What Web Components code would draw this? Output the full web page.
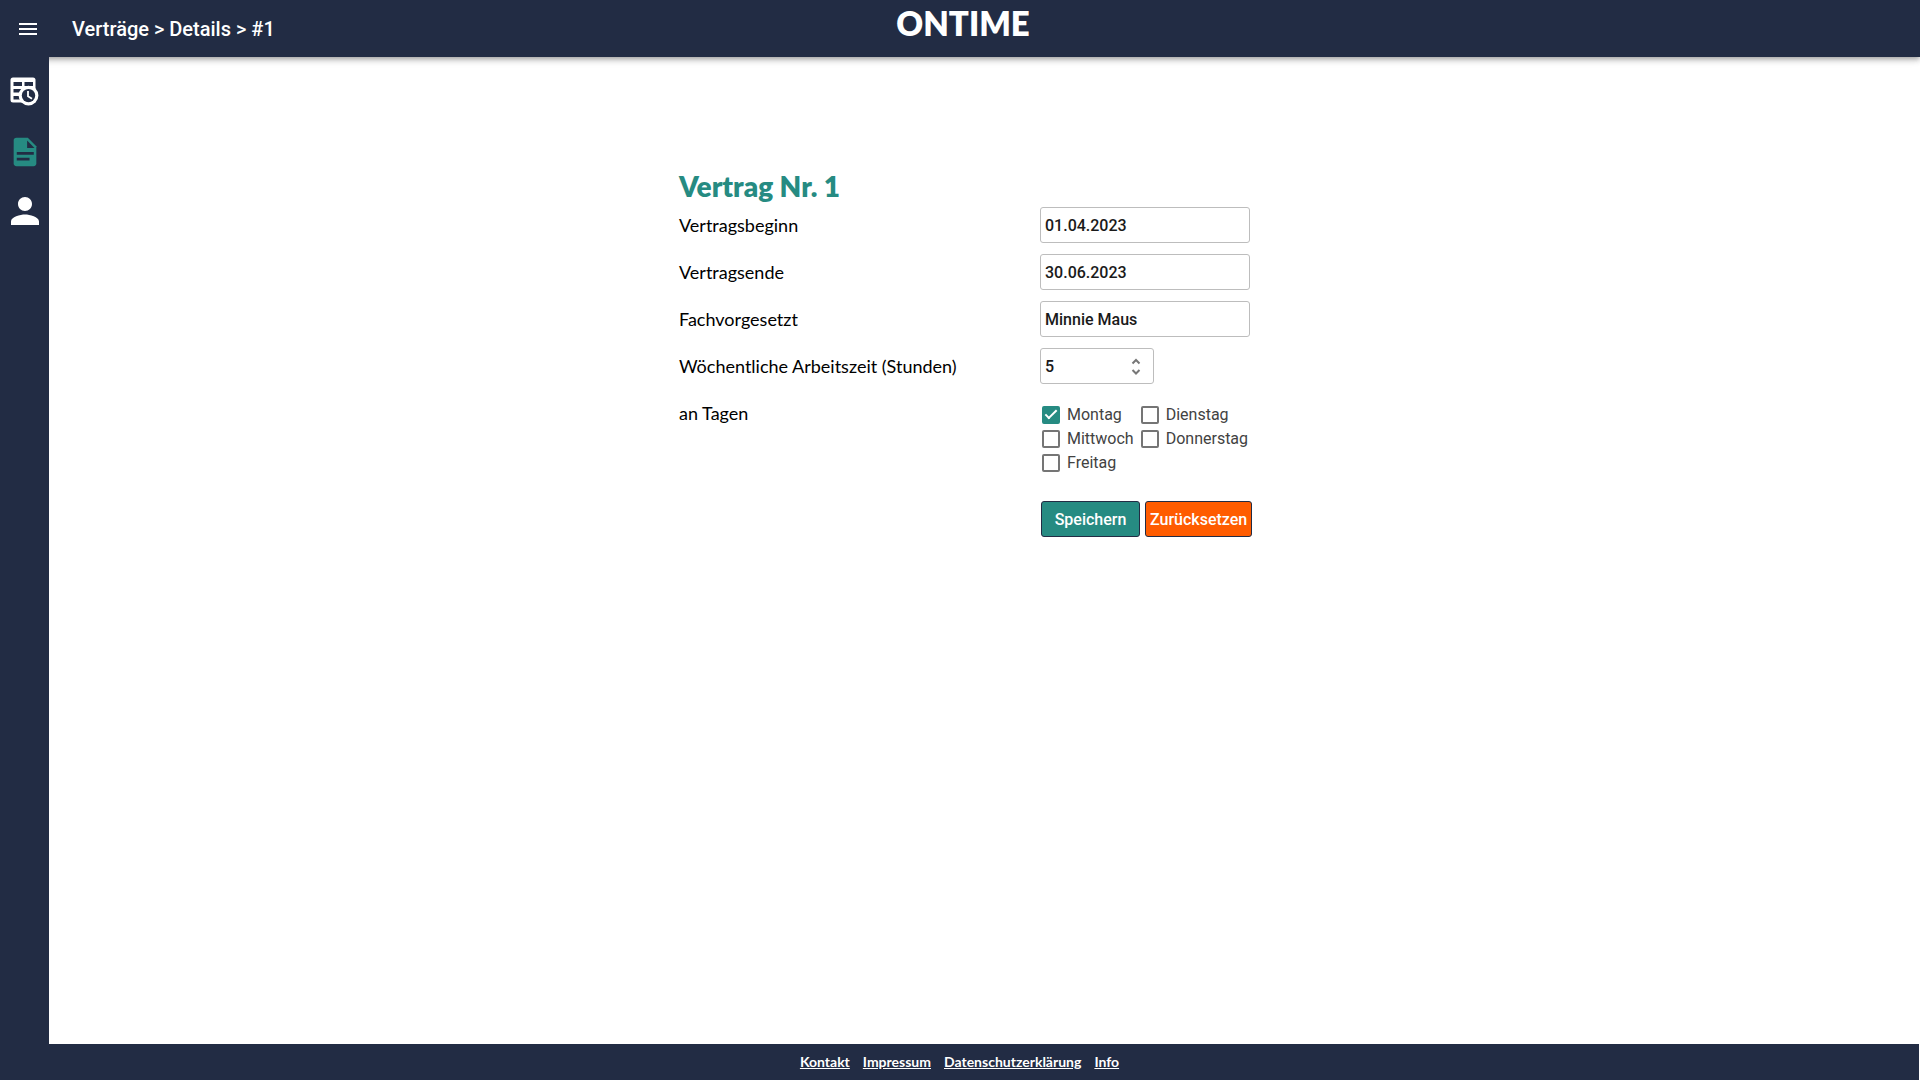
<!DOCTYPE html>
<html lang="de">
<head>
<meta charset="utf-8">
<title>ONTIME</title>
<style>
:root { --navy: #222c44; --teal: #268b82; --orange: #ff5c00; }
html, body { height: 100%; }
body { margin: 0; background: #fff; font-family: Lato, sans-serif; }
</style>
</head>
<body>
<ontime-app></ontime-app>
<script>
const define = (name, html, setup) => {
  const template = document.createElement('template');
  template.innerHTML = html;
  customElements.define(name, class extends HTMLElement {
    constructor() {
      super();
      this.attachShadow({ mode: 'open' }).append(template.content.cloneNode(true));
    }
    connectedCallback() { if (setup) setup(this, this.shadowRoot); }
  });
};

define('top-bar', `
<style>
:host { display: grid; grid-template-columns: 1fr auto 1fr; height: 57px; background: var(--navy); color: #fff; box-shadow: 0 2px 4px -1px rgba(0,0,0,.2), 0 4px 5px rgba(0,0,0,.14), 0 1px 10px rgba(0,0,0,.12); }
.left { display: flex; align-items: center; gap: 32px; padding-left: 16px; }
button { display: flex; padding: 0; border: 0; background: none; color: inherit; }
h1 { margin: 0; font: 500 20px/32px Roboto, sans-serif; }
.brand { padding: 3px 0 0 6px; font: 800 33px/40px Lato, sans-serif; }
svg { fill: currentColor; }
</style>
<div class="left">
  <button aria-label="Menü"><svg width="24" height="24" viewBox="0 0 24 24"><path d="M3 18h18v-2H3v2zm0-5h18v-2H3v2zm0-7v2h18V6H3z"/></svg></button>
  <h1><slot></slot></h1>
</div>
<div class="brand">ONTIME</div>`);

define('side-nav', `
<style>
:host { display: block; width: 49px; background: var(--navy); color: #fff; }
nav { display: flex; flex-direction: column; align-items: center; gap: 21px; padding-top: 20px; }
a { display: flex; color: inherit; }
a[aria-current] { color: var(--teal); }
svg { display: block; fill: currentColor; }
.cut { fill: var(--navy); }
</style>
<nav aria-label="Hauptmenü">
  <a href="#zeiten" aria-label="Zeiten"><svg width="29" height="37" viewBox="0 0 29 37">
    <rect x="0.500" y="0.500" width="25" height="25" rx="2.500"/>
    <path class="cut" d="M3.500 5H12v4H3.500zM14.500 5H23v4h-8.500zM3.500 12H12v3.500H3.500zM3.500 19H10v3.500H3.500z"/>
    <circle cx="18.500" cy="18.600" r="9.900"/><circle class="cut" cx="18.500" cy="18.600" r="6.700"/>
    <path d="M18 14v5.300l4 2.500" fill="none" stroke="currentColor" stroke-width="1.800"/></svg></a>
  <a href="#vertraege" aria-label="Verträge" aria-current="page"><svg width="34" height="34" viewBox="0 0 24 24"><path d="M6 2a2 2 0 0 0-2 2v16a2 2 0 0 0 2 2h12a2 2 0 0 0 2-2V8l-6-6z"/><path class="cut" d="M13.500 3.900v5.200h5.200zM6.200 12h12v2h-12zM6.200 16h9v2h-9z"/></svg></a>
  <a href="#profil" aria-label="Profil"><svg width="42" height="42" viewBox="0 0 24 24"><path d="M12 12c2.210 0 4-1.790 4-4s-1.790-4-4-4-4 1.790-4 4 1.790 4 4 4zm0 2c-2.670 0-8 1.340-8 4v2h16v-2c0-2.660-5.330-4-8-4z"/></svg></a>
</nav>`);

define('form-row', `
<style>
:host { display: grid; grid-template-columns: 361px 210px; align-items: start; margin-bottom: 11px; }
label { font: 18px/36px Lato, sans-serif; color: #000; }
.control { display: flex; align-items: center; height: 36px; box-sizing: border-box; border: 1px solid #bdbdbd; border-radius: 3px; padding: 1px 4px 0; }
input { width: 100%; min-width: 0; padding: 0; border: 0; outline: 0; background: none; font: 500 16px/24px Roboto, sans-serif; color: #1a1a1a; appearance: textfield; }
input::-webkit-inner-spin-button { display: none; }
.control svg { display: none; flex: none; margin-right: 8px; }
:host([type=number]) .control { width: 114px; }
:host([type=number]) svg { display: block; }
</style>
<label for="field"></label>
<div class="control"><input id="field"><svg width="10" height="18" viewBox="0 0 10 18" fill="none" stroke="#777" stroke-width="2"><path d="M1.500 5.500L5 2l3.500 3.500M1.500 12L5 15.500 8.500 12"/></svg></div>`,
(host, root) => {
  root.querySelector('label').textContent = host.getAttribute('label');
  const input = root.querySelector('input');
  input.type = host.getAttribute('type') || 'text';
  input.value = host.getAttribute('value');
});

define('day-check', `
<style>
:host { display: block; }
label { display: flex; align-items: center; gap: 7px; font: 16px/24px Roboto, sans-serif; color: #424242; }
input { appearance: none; margin: 0; flex: none; box-sizing: border-box; width: 18px; height: 18px; border: 2px solid #757575; border-radius: 2px; display: grid; place-items: center; }
input:checked { border-color: var(--teal); background: var(--teal); }
input:checked::after { content: ""; width: 10px; height: 4px; margin-bottom: 4px; border: solid #fff; border-width: 0 0 2px 2px; box-sizing: content-box; transform: rotate(-45deg); }
</style>
<label><input type="checkbox"><span><slot></slot></span></label>`,
(host, root) => { root.querySelector('input').checked = host.hasAttribute('checked'); });

define('action-button', `
<style>
button { height: 36px; min-width: 99px; padding: 1px 4px 0; border: 1px solid var(--navy); border-radius: 3px; background: var(--button-color, var(--teal)); color: #fff; font: 500 16px/24px Roboto, sans-serif; }
</style>
<button type="button"><slot></slot></button>`);

define('contract-form', `
<style>
:host { display: block; width: 574px; margin: 112px auto 0; }
h2 { margin: 0; font: 800 28px/34px Lato, sans-serif; color: var(--teal); }
form { margin-top: 4px; }
fieldset { display: grid; grid-template-columns: 361px 1fr; border: 0; margin: 0; padding: 0; }
legend { float: left; padding: 0; font: 18px/36px Lato, sans-serif; }
.days { display: grid; grid-template-columns: auto auto; justify-content: start; column-gap: 7px; padding: 8px 0 0 2px; }
.actions { display: flex; gap: 5px; padding: 26px 0 0 362px; }
.reset { --button-color: var(--orange); }
</style>
<h2>Vertrag Nr. 1</h2>
<form>
  <form-row label="Vertragsbeginn" value="01.04.2023"></form-row>
  <form-row label="Vertragsende" value="30.06.2023"></form-row>
  <form-row label="Fachvorgesetzt" value="Minnie Maus"></form-row>
  <form-row label="Wöchentliche Arbeitszeit (Stunden)" type="number" value="5"></form-row>
  <fieldset>
    <legend>an Tagen</legend>
    <div class="days">
      <day-check checked>Montag</day-check><day-check>Dienstag</day-check>
      <day-check>Mittwoch</day-check><day-check>Donnerstag</day-check>
      <day-check>Freitag</day-check>
    </div>
  </fieldset>
  <div class="actions"><action-button>Speichern</action-button><action-button class="reset">Zurücksetzen</action-button></div>
</form>`);

define('page-footer', `
<style>
:host { display: flex; justify-content: center; gap: 13px; height: 36px; margin-right: 1px; background: var(--navy); }
a { color: #fff; font: 700 14px/36px Lato, sans-serif; }
</style>
<a href="#kontakt">Kontakt</a><a href="#impressum">Impressum</a><a href="#datenschutz">Datenschutzerklärung</a><a href="#info">Info</a>`);

define('ontime-app', `
<style>
:host { display: flex; flex-direction: column; min-height: 100vh; }
.body { flex: 1; display: flex; }
main { flex: 1; padding-right: 37px; }
top-bar { z-index: 1; }
side-nav { z-index: 2; }
</style>
<top-bar>Verträge &gt; Details &gt; #1</top-bar>
<div class="body"><side-nav></side-nav><main><contract-form></contract-form></main></div>
<page-footer></page-footer>`);
</script>
</body>
</html>
